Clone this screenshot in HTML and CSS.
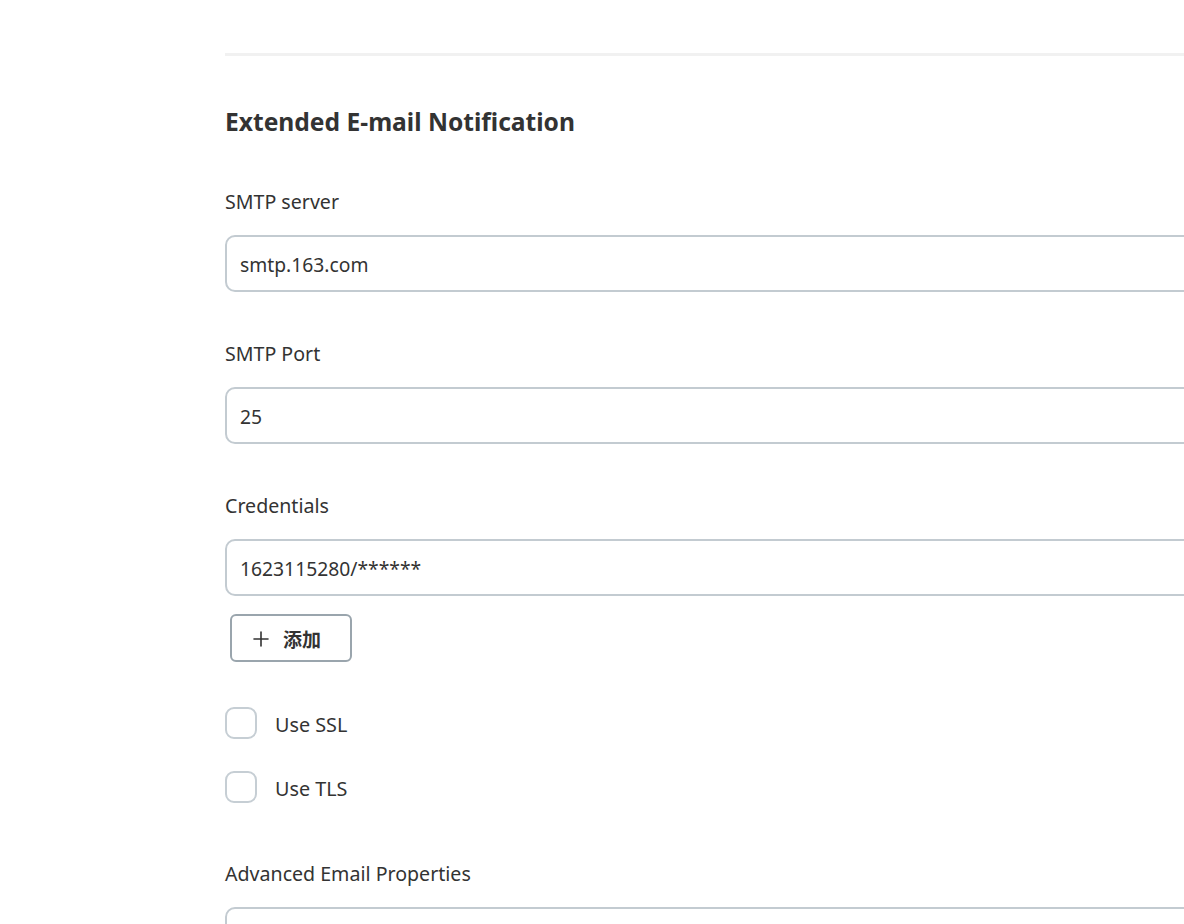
FILE: index.html
```html
<!DOCTYPE html>
<html lang="en">
<head>
<meta charset="utf-8">
<title>Extended E-mail Notification</title>
<link rel="stylesheet" href="styles.css">
</head>
<body>
<div class="page">
  <div class="divider"></div>
  <h2 class="section-title">Extended E-mail Notification</h2>

  <div class="field">
    <label class="field-label">SMTP server</label>
    <div class="text-input">smtp.163.com</div>
  </div>

  <div class="field">
    <label class="field-label">SMTP Port</label>
    <div class="text-input">25</div>
  </div>

  <div class="field field-credentials">
    <label class="field-label">Credentials</label>
    <div class="text-input">1623115280/******</div>
    <button class="add-button" type="button">
      <svg class="plus-icon" width="16" height="16" viewBox="0 0 16 16" aria-hidden="true">
        <path d="M8 1v14M1 8h14" stroke="#333" stroke-width="1.6" fill="none" stroke-linecap="round"/>
      </svg>
      <span class="add-text">添加</span>
    </button>
  </div>

  <div class="checks">
    <div class="check-row"><span class="checkbox"></span><span class="check-label">Use SSL</span></div>
    <div class="check-row"><span class="checkbox"></span><span class="check-label">Use TLS</span></div>
  </div>

  <div class="field">
    <label class="field-label">Advanced Email Properties</label>
    <div class="text-input text-area"></div>
  </div>
</div>
</body>
</html>
```

FILE: styles.css
```css
html, body {
  margin: 0;
  padding: 0;
  background: #ffffff;
  overflow: hidden;
}

body {
  font-family: "Noto Sans", "Open Sans", "Noto Sans CJK SC", sans-serif;
  color: #333333;
}

.page {
  width: 1100px;
  margin-left: 225px;
  padding-top: 53px;
}

.divider {
  height: 3px;
  background: #f1f1f1;
}

.section-title {
  margin: 51px 0 0 0;
  font-size: 24.6px;
  line-height: 30px;
  font-weight: 700;
  color: #333333;
}

.field {
  margin-top: 48px;
  display: flex;
  flex-direction: column;
}

.field + .field {
  margin-top: 45px;
}

.field-label {
  font-size: 19.6px;
  line-height: 27px;
  font-weight: 400;
  padding-top: 3px;
  margin-bottom: 20px;
}

.text-input {
  box-sizing: border-box;
  height: 57px;
  border: 2px solid #c3cbd1;
  border-radius: 10px;
  padding: 2px 13px 0;
  font-size: 19.3px;
  line-height: 51px;
  color: #333333;
  background: #fff;
}

.text-area {
  height: 120px;
}

.add-button {
  align-self: flex-start;
  margin: 18px 0 0 5px;
  box-sizing: border-box;
  width: 122px;
  height: 48px;
  border: 2px solid #9aa5ad;
  border-radius: 6px;
  background: #fff;
  display: flex;
  align-items: center;
  padding: 1px 0 0 21px;
  gap: 14px;
  font-family: "Noto Sans CJK SC", "Noto Sans", sans-serif;
  font-size: 19px;
  font-weight: 700;
  color: #333333;
}

.plus-icon {
  display: block;
}

.checks {
  margin-top: 45px;
  display: flex;
  flex-direction: column;
  gap: 32px;
}

.check-row {
  display: flex;
  align-items: center;
  gap: 18px;
  height: 32px;
}

.checkbox {
  box-sizing: border-box;
  width: 32px;
  height: 32px;
  border: 2px solid #c6ced4;
  border-radius: 9px;
  background: #fff;
}

.check-label {
  font-size: 19.8px;
  line-height: 27px;
  font-weight: 400;
  padding-top: 3px;
}

.checks + .field {
  margin-top: 54px;
}
```
